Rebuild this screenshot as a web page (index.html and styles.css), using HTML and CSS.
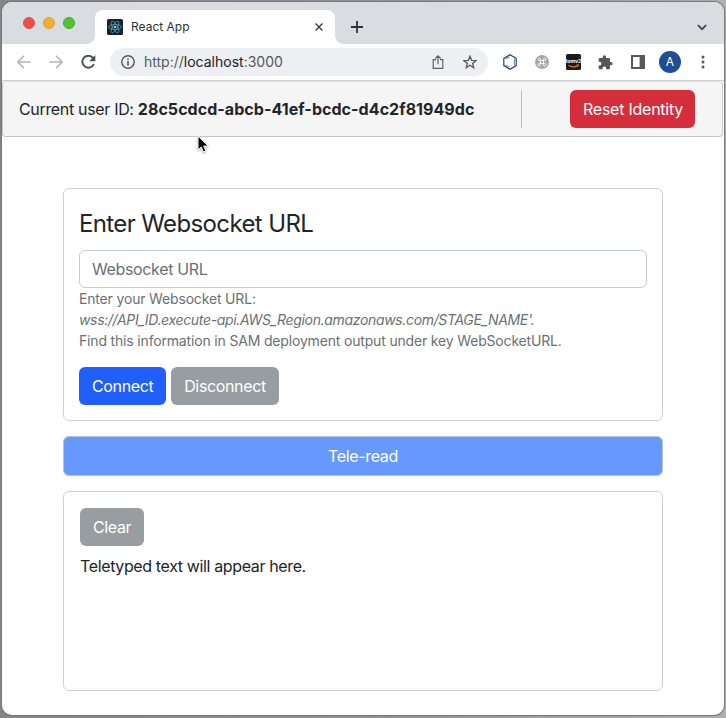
FILE: index.html
```html
<!DOCTYPE html>
<html lang="en">
<head>
<meta charset="utf-8">
<title>React App</title>
<link rel="stylesheet" href="styles.css">
</head>
<body>
<div class="window">
  <div class="tabstrip">
    <div class="lights"><i class="light red"></i><i class="light amber"></i><i class="light green"></i></div>
    <div class="tab">
      <svg class="favicon" width="16" height="16" viewBox="0 0 16 16"><rect width="16" height="16" rx="1.5" fill="#1b2026"/><g fill="none" stroke="#4f9fc4" stroke-width=".8"><ellipse cx="8" cy="8" rx="6.5" ry="2.5"/><ellipse cx="8" cy="8" rx="6.5" ry="2.5" transform="rotate(60 8 8)"/><ellipse cx="8" cy="8" rx="6.5" ry="2.5" transform="rotate(120 8 8)"/></g><circle cx="8" cy="8" r="1.3" fill="#8fd0ee"/></svg>
      <span class="tab-title">React App</span>
      <svg class="tab-close" width="8" height="8" viewBox="0 0 8 8"><path d="M.6.6l6.8 6.8M7.4.6L.6 7.4" stroke="#3c4043" stroke-width="1.4"/></svg>
    </div>
    <svg class="new-tab" width="12" height="12" viewBox="0 0 12 12"><path d="M6 0v12M0 6h12" stroke="#303236" stroke-width="1.8"/></svg>
    <svg class="tab-menu" width="10" height="7" viewBox="0 0 10 7"><path d="M.8 1L5 5.2 9.2 1" fill="none" stroke="#3c4043" stroke-width="1.7"/></svg>
  </div>
  <div class="toolbar">
    <svg class="back" width="14" height="14" viewBox="0 0 14 14"><path d="M13.6 7H1M7 .8L.9 7 7 13.2" fill="none" stroke="#b4b5b7" stroke-width="1.6"/></svg>
    <svg class="forward" width="14" height="14" viewBox="0 0 14 14"><path d="M.4 7H13M7 .8L13.1 7 7 13.2" fill="none" stroke="#b4b5b7" stroke-width="1.6"/></svg>
    <svg class="reload" width="15" height="14" viewBox="0 0 15 14"><path d="M12.2 3.2A6 6 0 1 0 12.9 9" fill="none" stroke="#4b4e52" stroke-width="1.9"/><path d="M14.3 0v6.2H8.2z" fill="#4b4e52"/></svg>
    <div class="address">
      <svg width="14" height="14" viewBox="0 0 14 14"><circle cx="7" cy="7" r="6.2" fill="none" stroke="#55585d" stroke-width="1.4"/><path d="M7 6.1v4.4M7 3.4v1.6" stroke="#55585d" stroke-width="1.6"/></svg>
      <span class="url">http://<b>localhost</b>:3000</span>
      <svg class="share" width="12" height="14" viewBox="0 0 11 14"><path d="M3.5 4.6H.7v8.7h9.6V4.6H7.5M5.5 9.3V1M2.8 3.5L5.5.9l2.7 2.6" fill="none" stroke="#5f6368" stroke-width="1.2"/></svg>
      <svg width="14" height="14" viewBox="0 0 14 14"><path d="M7 1.2l1.65 4.1 4.4.3-3.4 2.8 1.1 4.3L7 10.3l-3.75 2.4 1.1-4.3-3.4-2.8 4.4-.3z" fill="none" stroke="#55585d" stroke-width="1.3"/></svg>
    </div>
    <div class="extensions">
      <svg width="16" height="16" viewBox="0 0 16 16"><path d="M8 .8l6.2 3.6v7.2L8 15.2l-6.2-3.6V4.4z" fill="#fff" stroke="#37424e" stroke-width="1.2"/><path d="M7.5 2.8L3.5 5.1M3.5 10.9l4 2.3M12.4 5v6" stroke="#5b9bea" stroke-width="1.2"/></svg>
      <svg width="14" height="14" viewBox="0 0 14 14"><circle cx="7" cy="7" r="7" fill="#a8a8a8"/><path d="M5.5 5.5h3v3h-3zM5.5 5.5H4.300a1.200 1.200 0 1 1 1.200-1.200zM8.500 5.500V4.300a1.200 1.200 0 1 1 1.200 1.200zM8.500 8.500h1.200a1.200 1.200 0 1 1-1.200 1.200zM5.500 8.500v1.200a1.200 1.200 0 1 1-1.200-1.200z" fill="none" stroke="#f6f6f6" stroke-width="1"/></svg>
      <svg width="15" height="16" viewBox="0 0 15 16"><rect width="15" height="16" rx="1.5" fill="#1b1a1b"/><text class="badge-text" x="7.5" y="8.7" text-anchor="middle">tomv2</text><path d="M2.5 11.2q5 3.200 9.500.2" fill="none" stroke="#e67e22" stroke-width="1.2"/><path d="M10.500 10.800l2-.2-.3 2" fill="none" stroke="#e67e22" stroke-width=".8"/></svg>
      <svg width="15" height="15" viewBox="1 0.500 22.500 22.500"><path d="M20.500 11H19V7c0-1.100-.9-2-2-2h-4V3.500a2.500 2.500 0 0 0-5 0V5H4c-1.100 0-2 .9-2 2v3.800h1.500a2.700 2.700 0 0 1 0 5.400H2V20c0 1.100.9 2 2 2h3.800v-1.500a2.700 2.700 0 0 1 5.400 0V22H17c1.100 0 2-.9 2-2v-4h1.500a2.500 2.500 0 0 0 0-5z" fill="#55585d"/></svg>
      <svg class="panel" width="14" height="14" viewBox="0 0 14 14"><path d="M0 0h14v14H0zM2 2v10h6.600V2z" fill="#55585d" fill-rule="evenodd"/></svg>
      <span class="avatar">A</span>
      <svg width="4" height="14" viewBox="0 0 4 14"><g fill="#55585d"><circle cx="2" cy="2" r="1.5"/><circle cx="2" cy="7" r="1.5"/><circle cx="2" cy="12" r="1.5"/></g></svg>
    </div>
  </div>
  <main class="page">
    <header class="identity">
      <span class="user">Current user ID: <strong>28c5cdcd-abcb-41ef-bcdc-d4c2f81949dc</strong></span>
      <span class="rule"></span>
      <button class="btn danger">Reset Identity</button>
    </header>
    <div class="content">
      <section class="card connect">
        <h1>Enter Websocket URL</h1>
        <input class="field" type="text" placeholder="Websocket URL">
        <p class="help">Enter your Websocket URL:<br><em>wss://API_ID.execute-api.AWS_Region.amazonaws.com/STAGE_NAME'.</em><br>Find this information in SAM deployment output under key WebSocketURL.</p>
        <div class="actions"><button class="btn primary">Connect</button><button class="btn muted disconnect">Disconnect</button></div>
      </section>
      <button class="btn read">Tele-read</button>
      <section class="card output">
        <button class="btn muted clear">Clear</button>
        <p class="typed">Teletyped text will appear here.</p>
      </section>
    </div>
  </main>
</div>
<svg class="cursor" width="13" height="19" viewBox="0 0 13 19"><path d="M1 1v14l3.2-3 2.2 5 2.500-1.100-2.200-4.800h4.600z" fill="#000" stroke="#fff" stroke-width="1"/></svg>
</body>
</html>
```
FILE: styles.css
```css
* { box-sizing: border-box; }
body {
  margin: 0;
  height: 718px;
  padding: 2px 2px 3px;
  overflow: hidden;
  background: linear-gradient(90deg, #858585, #929292 50%, #b0b0b0);
  font-family: Inter, sans-serif;
  font-size: 16px;
  line-height: 24px;
  color: #212529;
}
svg { display: block; flex: none; }
.window {
  height: 713px;
  border-radius: 10px;
  overflow: hidden;
  background: #fff;
  box-shadow: 0 0 1px 1px #777;
}
.tabstrip { height: 42px; display: flex; background: #d9dce1; }
.lights { display: flex; gap: 8px; padding: 15px 0 0 21px; width: 93px; }
.light { width: 12px; height: 12px; border-radius: 50%; }
.red { background: #ec4f4a; border: 1px solid #d6504e; }
.amber { background: #f5b029; border: 1px solid #d99e35; }
.green { background: #51c334; border: 1px solid #48a634; }
.tab {
  position: relative;
  margin-top: 8px;
  width: 240px;
  height: 34px;
  padding: 0 12px;
  display: flex;
  align-items: center;
  background: #fff;
  border-radius: 8px 8px 0 0;
}
.tab::before, .tab::after {
  content: "";
  position: absolute;
  bottom: 0;
  width: 8px;
  height: 8px;
}
.tab::before { left: -8px; background: radial-gradient(circle at 0 0, #d9dce1 7.5px, #fff 8px); }
.tab::after { right: -8px; background: radial-gradient(circle at 100% 0, #d9dce1 7.5px, #fff 8px); }
.tab-title { margin-left: 8px; font-size: 12px; letter-spacing: 0; color: #303338; }
.tab-close { margin-left: auto; }
.new-tab { margin: 19px 0 0 16px; }
.tab-menu { margin: 22px 17px 0 auto; }
.toolbar {
  height: 37px;
  display: flex;
  align-items: center;
  padding-left: 15px;
  border-bottom: 1px solid #d0d1d2;
}
.forward { margin-left: 18px; }
.reload { margin-left: 18px; }
.address {
  display: flex;
  align-items: center;
  width: 378px;
  height: 28px;
  margin-left: 14px;
  padding: 0 11px;
  border-radius: 14px;
  background: #eeeff3;
}
.url { margin-left: 9px; font-size: 14px; letter-spacing: 0; color: #55585d; }
.url b { font-weight: 400; color: #202124; }
.share { margin: 0 19px 0 auto; }
.extensions { display: flex; align-items: center; margin-left: 14px; }
.extensions > * { margin-right: 17px; }
.extensions .panel { margin-right: 14px; margin-left: 1px; }
.badge-text { font: 700 5px Inter, sans-serif; fill: #fff; }
.extensions .avatar {
  width: 22px;
  height: 22px;
  margin-right: 20px;
  border-radius: 50%;
  background: #1d4f91;
  color: #fff;
  font-size: 12px;
  line-height: 22px;
  text-align: center;
}
.identity {
  display: flex;
  align-items: center;
  height: 56px;
  padding: 0 27px 0 16px;
  margin-right: 1px;
  border: 1px solid #c6c6c6;
  border-top-color: #e0e0e0;
  border-radius: 4px;
  background: #f5f5f5;
}
.user { width: 502px; white-space: nowrap; letter-spacing: -.33px; }
.user strong { font-weight: 650; letter-spacing: .05px; }
.rule { width: 1px; height: 38px; background: #bfbfbf; }
.btn {
  height: 38px;
  padding: 0 12px;
  border: 1px solid transparent;
  border-radius: 6px;
  color: #fff;
  font: 400 16px/24px Inter, sans-serif;
  letter-spacing: -.36px;
  white-space: nowrap;
}
.danger { width: 125px; margin-left: auto; background: #d62d3b; letter-spacing: -.24px; }
.content { display: flex; flex-direction: column; gap: 15px; width: 600px; margin: 51px 0 0 61px; }
.card { border: 1px solid #cfd0d1; border-radius: 6px; background: #fff; }
.connect { height: 233px; padding: 20px 15px 15px; }
h1 { margin: 0 0 11px; font-size: 24px; line-height: 30px; font-weight: 400; letter-spacing: -.62px; }
.field {
  display: block;
  width: 568px;
  height: 38px;
  padding: 0 12px;
  border: 1px solid #c5cbd1;
  border-radius: 6px;
  font: 400 16px/24px Inter, sans-serif;
  letter-spacing: -.36px;
}
.field::placeholder { color: #6a7077; opacity: 1; }
.help { margin: 0 0 16px; font-size: 14px; line-height: 21px; letter-spacing: -.17px; color: #6a7077; white-space: nowrap; }
.help em { letter-spacing: -.34px; }
.actions { display: flex; gap: 5px; }
.primary { width: 87px; background: #1f60fd; }
.muted { background: #979da1; }
.disconnect { width: 108px; }
.read { width: 600px; height: 40px; border-color: #b9c3d6; background: #6698fe; }
.output { height: 200px; padding: 16px; }
.clear { display: block; width: 64px; }
.typed { margin: 8px 0 0; letter-spacing: -.37px; }
.cursor { position: absolute; left: 197px; top: 135px; filter: drop-shadow(0 1px 1px rgba(0, 0, 0, .35)); }
```
